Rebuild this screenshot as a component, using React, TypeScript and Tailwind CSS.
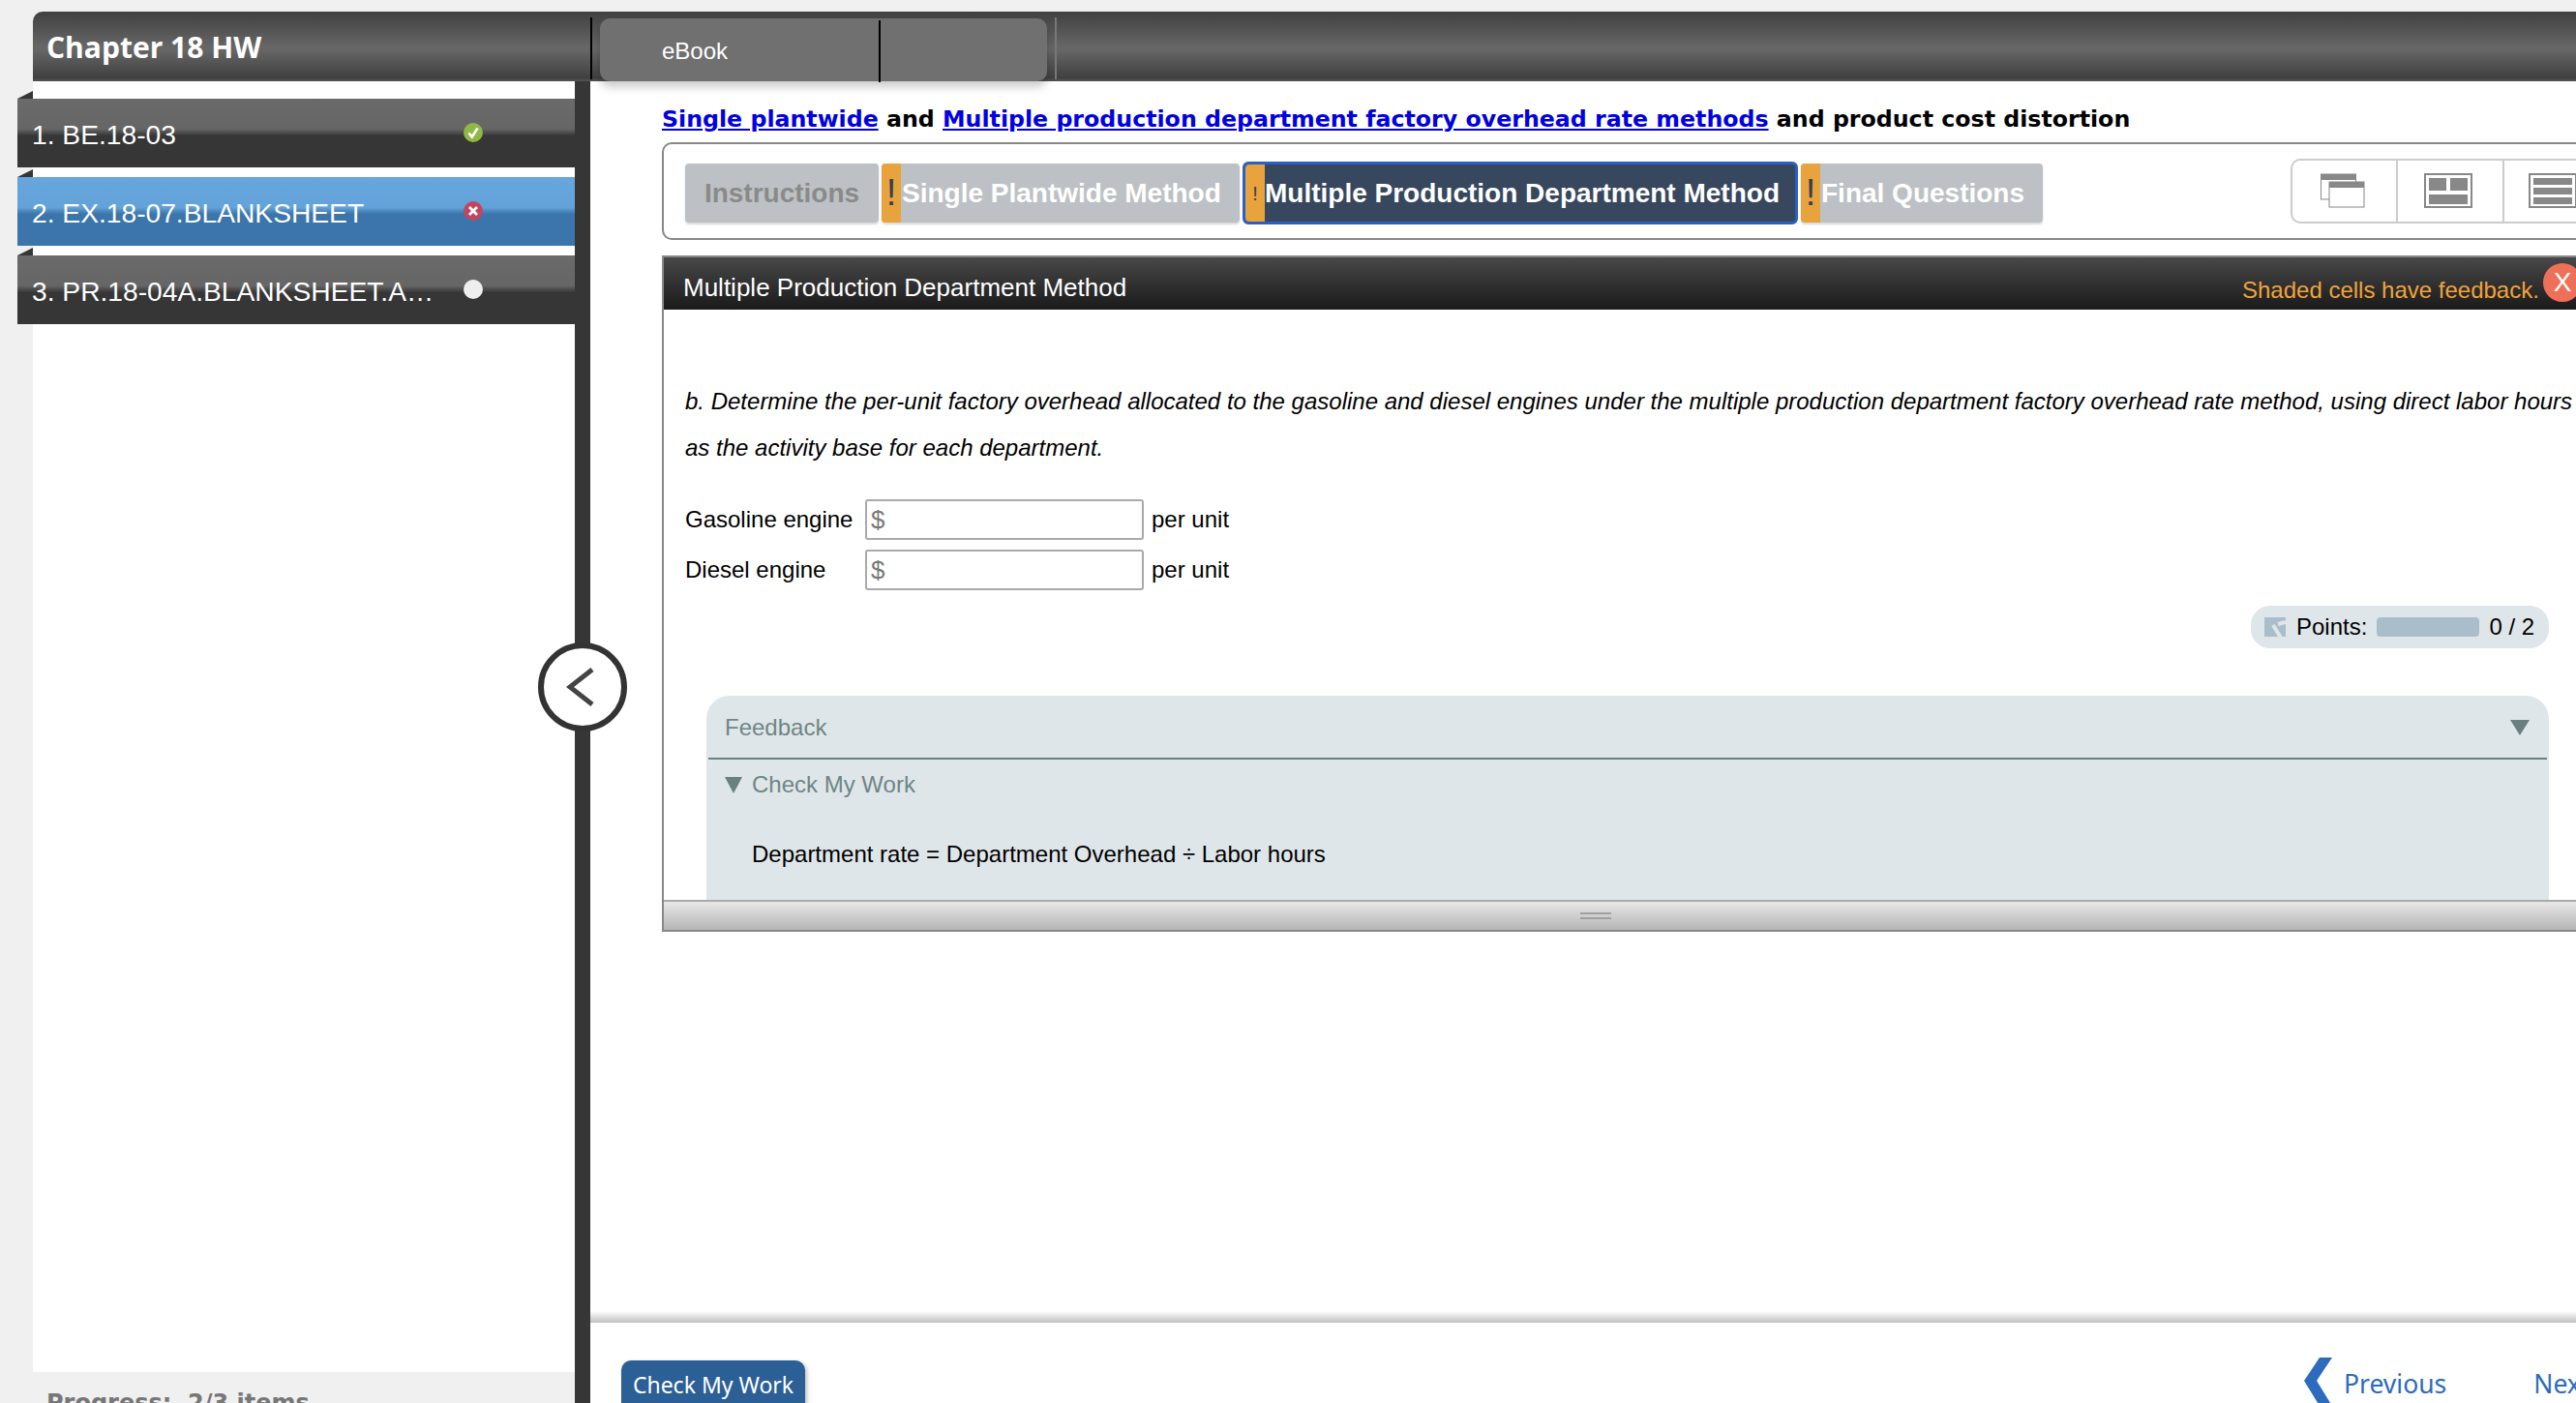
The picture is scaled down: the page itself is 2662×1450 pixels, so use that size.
type Item = { label: string; status: 'done' | 'wrong' | 'empty'; active?: boolean };

const items: Item[] = [
  { label: '1. BE.18-03', status: 'done' },
  { label: '2. EX.18-07.BLANKSHEET', status: 'wrong', active: true },
  { label: '3. PR.18-04A.BLANKSHEET.A…', status: 'empty' },
];

function StatusDot({ status }: { status: Item['status'] }) {
  if (status === 'done') {
    return (
      <svg width="20" height="20" viewBox="0 0 20 20" className="blur-[0.4px]">
        <circle cx="10" cy="10" r="10" fill="#8fb944" />
        <path d="M5.5 10.5 L8.8 14.5 L14.5 5.5" fill="none" stroke="#fff" strokeWidth="2.6" />
      </svg>
    );
  }
  if (status === 'wrong') {
    return (
      <svg width="20" height="20" viewBox="0 0 20 20" className="blur-[0.4px]">
        <circle cx="10" cy="10" r="10" fill="#c04660" />
        <path d="M6 6 L14 14 M14 6 L6 14" fill="none" stroke="#fff" strokeWidth="2.8" />
      </svg>
    );
  }
  return <div className="h-5 w-5 rounded-full bg-[#eeeeee] blur-[0.5px]" />;
}

function SideItem({ item }: { item: Item }) {
  const bg = item.active
    ? 'bg-[linear-gradient(#66a6dc_0%,#64a3d9_44%,#3b75ab_54%,#3b75ab_100%)]'
    : 'bg-[linear-gradient(#6a6a6a_0%,#666666_44%,#363636_54%,#363636_100%)]';
  return (
    <div className="relative -ml-4 mt-[10px] first:mt-[18px]">
      <div className="absolute -top-2 left-0 h-0 w-0 border-b-[8px] border-l-[16px] border-b-[#363636] border-l-transparent" />
      <div className={`flex h-[71px] w-[576px] items-center pl-[15px] pt-[4px] font-['Liberation_Sans',sans-serif] text-[28.2px] text-white ${bg}`}>
        <span className="w-[446px] whitespace-nowrap">{item.label}</span>
        <div className="-mt-[6px]">
          <StatusDot status={item.status} />
        </div>
      </div>
    </div>
  );
}

function TabFlag({ big }: { big?: boolean }) {
  return (
    <div className={`flex h-full w-[20px] shrink-0 items-center justify-center rounded-l-[4px] bg-[#e8a33d] font-['Liberation_Sans',sans-serif] font-normal text-[#333f55] ${big ? 'text-[38px]' : 'text-[20px]'}`}>
      !
    </div>
  );
}

function ViewIcons() {
  return (
    <div className="ml-auto flex h-[67px] w-[417px] shrink-0 rounded-l-[10px] border-2 border-r-0 border-[#ccc]">
      <div className="flex w-[109px] items-center justify-center border-r-2 border-[#ccc] pr-[5px]">
        <svg width="50" height="36" viewBox="0 0 50 36" className="-mt-[2px]">
          <rect x="3.5" y="1" width="36" height="26" fill="#fff" stroke="#888" />
          <rect x="3.5" y="1" width="36" height="6" fill="#888" />
          <rect x="12" y="9" width="36" height="26" fill="#fff" stroke="#888" />
          <rect x="12" y="9" width="36" height="6" fill="#888" />
        </svg>
      </div>
      <div className="flex w-[110px] items-center justify-center border-r-2 border-[#ccc] pr-[4px]">
        <svg width="50" height="36" viewBox="0 0 50 36" className="-mt-[2px]">
          <rect x="1" y="1" width="48" height="34" fill="#fff" stroke="#888" strokeWidth="2" />
          <rect x="5" y="5" width="18" height="13" fill="#888" />
          <rect x="27" y="5" width="18" height="13" fill="#888" />
          <rect x="5" y="22" width="40" height="10" fill="#888" />
        </svg>
      </div>
      <div className="flex flex-1 items-center pl-[25px]">
        <svg width="50" height="36" viewBox="0 0 50 36" className="-mt-[2px]">
          <rect x="1" y="1" width="48" height="34" fill="#fff" stroke="#888" strokeWidth="2" />
          <rect x="5" y="5" width="40" height="7" fill="#888" />
          <rect x="5" y="15" width="40" height="7" fill="#888" />
          <rect x="5" y="25" width="40" height="7" fill="#888" />
        </svg>
      </div>
    </div>
  );
}

function AmountRow({ label }: { label: string }) {
  return (
    <div className="flex h-[42px] items-center font-['Liberation_Sans',sans-serif] text-[24px] text-black">
      <span className="w-[186px] whitespace-nowrap">{label}</span>
      <div className="flex h-[42px] w-[288px] items-center rounded-[3px] border-2 border-[#aaa] bg-white pl-[4px] text-[26px] text-[#777]">$</div>
      <span className="ml-[8px]">per unit</span>
    </div>
  );
}

export default function App() {
  return (
    <div className="flex h-[1450px] w-[2662px] flex-col overflow-hidden bg-[#f0f0f0] pt-[12px] font-['Liberation_Sans',sans-serif]">
      {/* Top bar */}
      <div className="relative z-10 ml-[34px] flex h-[72px] shrink-0 rounded-tl-[10px] bg-[linear-gradient(#404040_0%,#666666_50%,#666666_55%,#404040_95%,#555555_100%)]">
        <div className="flex w-[576px] items-center pl-[14px] font-['Open_Sans',sans-serif] text-[30px] font-bold text-white">
          Chapter 18 HW
        </div>
        <div className="mt-[6px] h-[64px] w-[2px] bg-black" />
        <div className="ml-[8px] mt-[7px] flex h-[65px] w-[462px] rounded-[10px] bg-[#707070] shadow-[0_6px_10px_rgba(0,0,0,0.2)]">
          <div className="flex w-[288px] items-center pl-[64px] pt-[2px] text-[24px] text-white">eBook</div>
          <div className="mt-[2px] h-[64px] w-[2px] bg-black" />
        </div>
        <div className="ml-[8px] mt-[6px] h-[64px] w-[2px] bg-[#777]" />
      </div>

      <div className="flex min-h-0 flex-1">
        {/* Sidebar */}
        <div className="ml-[34px] flex w-[560px] shrink-0 flex-col">
          <div className="flex h-[1334px] shrink-0 flex-col bg-white">
            {items.map((item) => (
              <SideItem key={item.label} item={item} />
            ))}
          </div>
          <div className="pl-[14px] pt-[14px] font-['DejaVu_Sans',sans-serif] text-[24px] font-bold whitespace-nowrap text-[#777]">
            Progress: &nbsp;2/3 items
          </div>
        </div>

        {/* Divider with collapse handle */}
        <div className="relative w-[16px] shrink-0 bg-[#363636]">
          <div className="absolute -left-[38px] top-[580px] flex h-[92px] w-[92px] items-center justify-center rounded-full border-[6px] border-[#333] bg-white">
            <svg width="30" height="40" viewBox="0 0 30 40" className="-ml-[4px] blur-[0.5px]">
              <path d="M27 2 L4 20 L27 38" fill="none" stroke="#444" strokeWidth="5" />
            </svg>
          </div>
        </div>

        {/* Main */}
        <div className="flex min-w-0 flex-1 flex-col bg-white">
          <div className="flex h-[1283px] shrink-0 flex-col overflow-hidden pl-[74px]">
            <div className="flex h-[63px] shrink-0 items-end pb-[5px] font-['DejaVu_Sans',sans-serif] text-[23.7px] font-bold whitespace-nowrap text-black">
              <p>
                <a href="#" className="text-[#0000e0] underline">Single plantwide</a> and{' '}
                <a href="#" className="text-[#0000e0] underline">Multiple production department factory overhead rate methods</a> and product cost distortion
              </p>
            </div>

            {/* Tabs */}
            <div className="flex h-[101px] w-[2100px] shrink-0 items-center rounded-l-[10px] border-2 border-r-0 border-[#888] pl-[22px]">
              <div className="mt-[4px] flex h-[61px] items-center gap-[3px] text-[28px] font-bold whitespace-nowrap">
                <div className="flex h-full w-[200px] items-center justify-center rounded-[4px] bg-[#bdc1c5] text-[#8a8a8a] shadow-[0_2px_2px_rgba(0,0,0,0.15)]">Instructions</div>
                <div className="flex h-full w-[370px] items-center rounded-[4px] bg-[#bdc1c5] text-white shadow-[0_2px_2px_rgba(0,0,0,0.15)]">
                  <TabFlag big />
                  <span className="pl-[1px]">Single Plantwide Method</span>
                </div>
                <div className="flex h-[65px] w-[574px] items-center rounded-[6px] border-[3px] border-[#2a60c4] bg-[#37475e] text-white">
                  <TabFlag />
                  <span>Multiple Production Department Method</span>
                </div>
                <div className="flex h-full w-[250px] items-center rounded-[4px] bg-[#bdc1c5] text-white shadow-[0_2px_2px_rgba(0,0,0,0.15)]">
                  <TabFlag big />
                  <span className="pl-[1px]">Final Questions</span>
                </div>
              </div>
              <ViewIcons />
            </div>

            {/* Question panel */}
            <div className="mt-[16px] flex w-[2100px] flex-col">
              <div className="flex h-[699px] flex-col border-l-2 border-[#888]">
                <div className="relative flex h-[56px] shrink-0 items-center justify-between border-t-2 border-[#888] bg-[linear-gradient(#484848,#1a1a1a)] pl-[20px] pt-[8px] text-white">
                  <span className="text-[26px]">Multiple Production Department Method</span>
                  <span className="absolute left-[1631px] top-[16px] text-[24px] whitespace-nowrap text-[#f0a33c]">Shaded cells have feedback.</span>
                  <div className="absolute left-[1942px] top-[6px] flex h-[40px] w-[40px] items-center justify-center rounded-full bg-[#ee7058] text-[28px]">X</div>
                </div>
                <div className="relative min-h-0 flex-1 overflow-hidden">
                  <div className="pl-[22px] pt-[71px] text-[24px] leading-[48px] text-black italic">
                    <p className="whitespace-nowrap">b. Determine the per-unit factory overhead allocated to the gasoline and diesel engines under the multiple production department factory overhead rate method, using direct labor hours</p>
                    <p className="whitespace-nowrap">as the activity base for each department.</p>
                  </div>
                  <div className="mt-[29px] flex flex-col gap-[10px] pl-[22px]">
                    <AmountRow label="Gasoline engine" />
                    <AmountRow label="Diesel engine" />
                  </div>
                  <div className="ml-[1640px] mt-[16px] flex h-[44px] w-[308px] items-center rounded-[20px] bg-[#dfe6e9] pl-[14px] text-[24px] text-black">
                    <svg width="22" height="20" viewBox="0 0 22 20">
                      <rect width="22" height="20" fill="#aabdcb" />
                      <path d="M9 8 L17 21 M14 7 L22 5" fill="none" stroke="#dfe6e9" strokeWidth="4" />
                    </svg>
                    <span className="ml-[11px]">Points:</span>
                    <div className="ml-[10px] h-[20px] w-[106px] rounded-[4px] bg-[#aabdcb]" />
                    <span className="ml-[10px]">0 / 2</span>
                  </div>

                  {/* Feedback */}
                  <div className="ml-[44px] mt-[49px] h-[300px] w-[1904px] rounded-t-[24px] bg-[#dfe6e9]">
                    <div className="mx-[2px] flex h-[66px] items-center justify-between border-b-2 border-[#6a8080] pl-[17px] pr-[18px] pt-[2px] text-[24px] text-[#6f8585]">
                      <span>Feedback</span>
                      <svg width="20" height="16" viewBox="0 0 20 16">
                        <path d="M0 0H20L10 16Z" fill="#6a8080" />
                      </svg>
                    </div>
                    <div className="flex h-[50px] items-center pl-[19px] pt-[2px] text-[24px] text-[#6f8585]">
                      <svg width="18" height="17" viewBox="0 0 18 17">
                        <path d="M0 0H18L9 17Z" fill="#6a8080" />
                      </svg>
                      <span className="ml-[10px]">Check My Work</span>
                    </div>
                    <p className="pl-[47px] pt-[30px] text-[24px] text-black">Department rate = Department Overhead ÷ Labor hours</p>
                  </div>
                </div>
                <div className="relative flex h-[33px] shrink-0 items-center justify-center border-y-2 border-t-[#aaa] border-b-[#888] bg-[linear-gradient(#e8e8e8,#b5b5b5)]">
                  <div className="mr-[172px] h-[7px] w-[32px] border-y-2 border-[#a0a0a0]" />
                </div>
              </div>
            </div>
          </div>

          {/* Footer */}
          <div className="relative flex min-h-0 flex-1 items-start">
            <div className="absolute -top-[12px] left-0 h-[12px] w-full bg-[linear-gradient(rgba(255,255,255,0),#bfbfbf)]" />
            <div className="ml-[32px] mt-[39px] flex h-[60px] w-[190px] shrink-0 items-start justify-center rounded-[10px] bg-[#2c5f96] pt-[8px] font-['Noto_Sans',sans-serif] text-[23px] text-white shadow-[2px_2px_4px_rgba(0,0,0,0.25)]">
              Check My Work
            </div>
            <div className="ml-[1549px] mt-[36px] flex shrink-0 items-start font-['Noto_Sans',sans-serif] text-[26.5px] text-[#2d6bbd]">
              <svg width="29" height="50" viewBox="0 0 29 50">
                <path d="M16 0H29L13 24L29 50H16L0 24Z" fill="#2d6bbd" />
              </svg>
              <span className="ml-[12px] mt-[8px]">Previous</span>
              <span className="ml-[90px] mt-[8px]">Next</span>
            </div>
          </div>
        </div>
      </div>
    </div>
  );
}
